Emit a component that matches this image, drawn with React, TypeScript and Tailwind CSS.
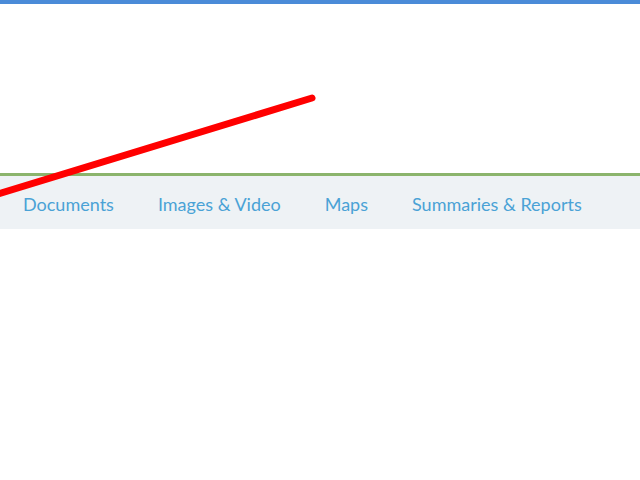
export default function App() {
  const items = ["Documents", "Images & Video", "Maps", "Summaries & Reports"];
  return (
    <div className="relative w-[640px] h-[480px] bg-white overflow-hidden" style={{ fontFamily: "Lato, 'Open Sans', sans-serif" }}>
      <div className="h-[4px] bg-[#4a8bd8]" />
      <div className="h-[169px] bg-white" />
      <div className="h-[3px] bg-[#8bb46c]" />
      <nav className="h-[53px] bg-[#eef2f5] flex items-center pl-[1px] pt-[2px]">
        {items.map((t) => (
          <a key={t} className="px-[22px] text-[18px] text-[#4aa2d6] leading-none">
            {t}
          </a>
        ))}
      </nav>
      <svg className="absolute left-0 top-0 pointer-events-none" width="640" height="480">
        <line x1="-10" y1="196.5" x2="312" y2="98" stroke="#ff0000" strokeWidth="7" strokeLinecap="round" />
      </svg>
    </div>
  );
}
